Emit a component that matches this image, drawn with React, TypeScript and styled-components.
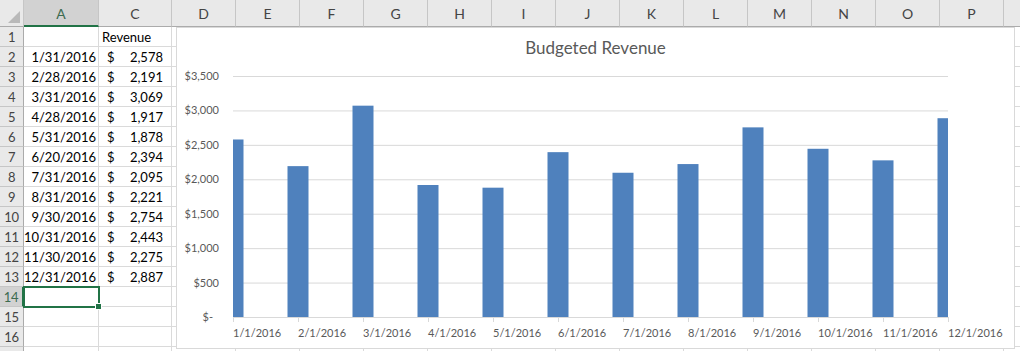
import styled, { createGlobalStyle } from 'styled-components'

const GlobalStyle = createGlobalStyle`
  html, body {
    margin: 0;
    padding: 0;
    background: #ffffff;
    overflow: hidden;
  }
  body {
    font-family: Lato, "Open Sans", sans-serif;
  }
`

const GREEN = '#217346'
const GRID = '#dadada'
const CHART_TEXT = '#595959'

const rows: [string, number][] = [
  ['1/31/2016', 2578],
  ['2/28/2016', 2191],
  ['3/31/2016', 3069],
  ['4/28/2016', 1917],
  ['5/31/2016', 1878],
  ['6/20/2016', 2394],
  ['7/31/2016', 2095],
  ['8/31/2016', 2221],
  ['9/30/2016', 2754],
  ['10/31/2016', 2443],
  ['11/30/2016', 2275],
  ['12/31/2016', 2887],
]

// last column only peeks in at the right edge, so its letter is off screen
const columns = ['A', 'C', 'D', 'E', 'F', 'G', 'H', 'I', 'J', 'K', 'L', 'M', 'N', 'O', 'P', '']
const ROW_COUNT = 17
const VISIBLE_ROWS = 16
const ACTIVE_ROW = 14

const Sheet = styled.div`
  position: relative;
  display: grid;
  grid-template-columns: 24px 75px 73px repeat(13, 64px) 64px;
  grid-template-rows: 27px repeat(${ROW_COUNT}, 20px);
  width: 1020px;
  height: 351px;
  overflow: hidden;
  font-family: Lato, "Open Sans", sans-serif;
`

const Corner = styled.div`
  position: relative;
  box-sizing: border-box;
  background: #e9e9e9;
  border-right: 1px solid #c6c6c6;
  border-bottom: 1px solid #ababab;

  &::after {
    content: '';
    position: absolute;
    right: 3px;
    bottom: 3px;
    width: 12px;
    height: 12px;
    background: #b9b9b9;
    clip-path: polygon(100% 0, 100% 100%, 0 100%);
  }
`

const ColHeader = styled.div<{ $selected?: boolean }>`
  display: flex;
  align-items: center;
  justify-content: center;
  box-sizing: border-box;
  padding-top: 1px;
  background: ${({ $selected }) => ($selected ? '#d2d2d2' : '#e9e9e9')};
  border-right: 1px solid #c6c6c6;
  border-bottom: ${({ $selected }) => ($selected ? `2px solid ${GREEN}` : '1px solid #ababab')};
  color: ${({ $selected }) => ($selected ? '#3d6b50' : '#444444')};
  font-size: 14px;
`

const RowHeader = styled.div<{ $selected?: boolean }>`
  display: flex;
  align-items: center;
  justify-content: center;
  box-sizing: border-box;
  background: ${({ $selected }) => ($selected ? '#d2d2d2' : '#e9e9e9')};
  border-right: ${({ $selected }) => ($selected ? `2px solid ${GREEN}` : '1px solid #ababab')};
  border-bottom: 1px solid #c6c6c6;
  color: ${({ $selected }) => ($selected ? '#3d6b50' : '#444444')};
  font-size: 13px;
  letter-spacing: -0.3px;
`

const Cell = styled.div<{ $align?: 'left' | 'right' | 'money'; $active?: boolean }>`
  position: relative;
  display: flex;
  align-items: center;
  justify-content: ${({ $align }) =>
    $align === 'right' ? 'flex-end' : $align === 'money' ? 'space-between' : 'flex-start'};
  box-sizing: border-box;
  padding: ${({ $align }) =>
    $align === 'right' ? '1px 2px 0 0' : $align === 'money' ? '1px 8px 0 8px' : '1px 0 0 3px'};
  border-right: 1px solid ${GRID};
  border-bottom: 1px solid ${GRID};
  color: #000000;
  font-size: 13px;
  white-space: nowrap;
  outline: ${({ $active }) => ($active ? `2px solid ${GREEN}` : 'none')};
  outline-offset: -1px;

  &::after {
    content: '';
    display: ${({ $active }) => ($active ? 'block' : 'none')};
    position: absolute;
    right: -4px;
    bottom: -4px;
    width: 5px;
    height: 5px;
    background: ${GREEN};
    border: 1px solid #ffffff;
    z-index: 2;
  }
`

/* chart floats over the cells like an Excel chart object */
const ChartBox = styled.div`
  position: absolute;
  left: 176px;
  top: 27px;
  width: 839px;
  height: 322px;
  box-sizing: border-box;
  display: flex;
  flex-direction: column;
  background: #ffffff;
  border: 1px solid #d9d9d9;
  z-index: 3;
`

const ChartTitle = styled.div`
  height: 30px;
  box-sizing: border-box;
  padding-top: 9px;
  text-align: center;
  color: ${CHART_TEXT};
  font-family: Lato, "Open Sans", sans-serif;
  font-size: 17px;
  line-height: 21px;
`

const Plot = styled.svg`
  display: block;
  flex: 1;
  font-family: Lato, "Open Sans", sans-serif;
`

const X0 = 56
const STEP = 65
const ZERO_Y = 259
const TOP_Y = 18
const MAX = 3500
const BAR_W = 21
const X_END = X0 + STEP * 11

const yOf = (v: number) => ZERO_Y - ((ZERO_Y - TOP_Y) * v) / MAX

const yTicks = [3500, 3000, 2500, 2000, 1500, 1000, 500]
const fmtMoney = (v: number) => '$' + v.toLocaleString('en-US')

const xLabels = Array.from({ length: 12 }, (_, i) => `${i + 1}/1/2016`)

function Chart() {
  return (
    <ChartBox>
      <ChartTitle>Budgeted Revenue</ChartTitle>
      <Plot width={837} height={290}>
        {yTicks.map((v) => (
          <g key={v}>
            <line x1={X0} x2={X_END} y1={yOf(v) + 0.5} y2={yOf(v) + 0.5} stroke="#d9d9d9" strokeWidth={1} />
            <text x={42} y={yOf(v) + 4} textAnchor="end" fontSize={11} fill={CHART_TEXT}>
              {fmtMoney(v)}
            </text>
          </g>
        ))}
        <text x={36} y={ZERO_Y + 4} textAnchor="end" fontSize={11} fill={CHART_TEXT}>
          $-
        </text>
        {rows.map(([, v], i) => {
          const cx = X0 + i * STEP
          const left = Math.max(X0, cx - BAR_W / 2)
          const right = Math.min(X_END, cx + BAR_W / 2)
          const top = yOf(v)
          return <rect key={i} x={left} y={top} width={right - left} height={ZERO_Y - top} fill="#4f81bd" />
        })}
        <line x1={X0} x2={X_END} y1={ZERO_Y + 0.5} y2={ZERO_Y + 0.5} stroke="#d9d9d9" strokeWidth={1} />
        {xLabels.map((label, i) => {
          const x = X0 + i * STEP
          return (
            <g key={label}>
              <line x1={x + 0.5} x2={x + 0.5} y1={ZERO_Y} y2={ZERO_Y + 5} stroke="#d9d9d9" strokeWidth={1} />
              <text x={x} y={279} fontSize={11} fill={CHART_TEXT}>
                {label}
              </text>
            </g>
          )
        })}
      </Plot>
    </ChartBox>
  )
}

export default function App() {
  const body = []
  for (let r = 1; r <= ROW_COUNT; r++) {
    const active = r === ACTIVE_ROW
    body.push(
      <RowHeader key={`h${r}`} $selected={active}>
        {r <= VISIBLE_ROWS ? r : ''}
      </RowHeader>
    )
    const data = r >= 2 && r <= 13 ? rows[r - 2] : null
    body.push(
      <Cell key={`a${r}`} $align="right" $active={active}>
        {data ? data[0] : ''}
      </Cell>
    )
    if (r === 1) {
      body.push(<Cell key={`c${r}`}>Revenue</Cell>)
    } else if (data) {
      body.push(
        <Cell key={`c${r}`} $align="money">
          <span>$</span>
          <span>{data[1].toLocaleString('en-US')}</span>
        </Cell>
      )
    } else {
      body.push(<Cell key={`c${r}`} />)
    }
    for (let c = 2; c < columns.length; c++) {
      body.push(<Cell key={`col${c}-${r}`} />)
    }
  }

  return (
    <>
      <GlobalStyle />
      <Sheet>
        <Corner />
        {columns.map((c, i) => (
          <ColHeader key={`head${i}`} $selected={c === 'A'}>
            {c}
          </ColHeader>
        ))}
        {body}
        <Chart />
      </Sheet>
    </>
  )
}
